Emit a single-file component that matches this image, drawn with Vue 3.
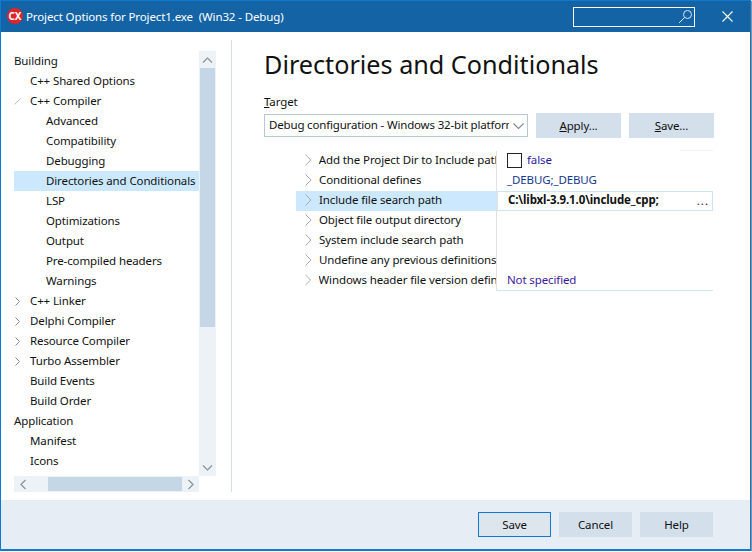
<template>
  <div class="window">
    <header class="titlebar">
      <span class="logo">CX</span>
      <span class="title">Project Options for Project1.exe&nbsp; (Win32 - Debug)</span>
      <div class="search">
        <svg width="15" height="15" viewBox="0 0 15 15" fill="none" stroke="#d8e6f2" stroke-width="1">
          <circle cx="9.5" cy="5.5" r="4" />
          <path d="M6.5 8.5 1 14" />
        </svg>
      </div>
      <svg class="close" width="11" height="11" viewBox="0 0 11 11" stroke="#fff" stroke-width="1.1">
        <path d="M.5.5l10 10M10.5.5l-10 10" />
      </svg>
    </header>

    <div class="body">
      <aside class="nav">
        <div class="tree-wrap">
          <ul class="tree">
            <li
              v-for="node in tree"
              :key="node.label"
              class="tree-row"
              :class="['level-' + node.level, { selected: node.selected }]"
            >
              <svg v-if="node.state === 'closed'" class="twisty" width="5" height="9" viewBox="0 0 5 9" fill="none" stroke="#8a8a8a">
                <path d="M.5.5l4 4-4 4" />
              </svg>
              <svg v-if="node.state === 'open'" class="twisty open" width="7" height="7" viewBox="0 0 7 7" fill="none" stroke="#bdbdbd">
                <path d="M.5 6.5l6-6" />
              </svg>
              {{ node.label }}
            </li>
          </ul>
          <div class="vscroll">
            <div class="arrow">
              <svg width="11" height="6" viewBox="0 0 11 6" fill="none" stroke="#8a9299" stroke-width="1.2"><path d="M1 5.500l4.500-4.500 4.500 4.500" /></svg>
            </div>
            <div class="vthumb"></div>
            <div class="vtrack"></div>
            <div class="arrow">
              <svg width="11" height="6" viewBox="0 0 11 6" fill="none" stroke="#8a9299" stroke-width="1.2"><path d="M1 .5l4.500 4.500 4.500-4.500" /></svg>
            </div>
          </div>
        </div>
        <div class="hscroll">
          <div class="harrow">
            <svg width="6" height="11" viewBox="0 0 6 11" fill="none" stroke="#8a9299" stroke-width="1.2"><path d="M5.500 1l-4.500 4.500 4.500 4.500" /></svg>
          </div>
          <div class="hspace"></div>
          <div class="hthumb"></div>
          <div class="harrow">
            <svg width="6" height="11" viewBox="0 0 6 11" fill="none" stroke="#8a9299" stroke-width="1.2"><path d="M.5 1l4.500 4.500-4.500 4.500" /></svg>
          </div>
        </div>
      </aside>

      <main class="content">
        <h1>Directories and Conditionals</h1>
        <label class="target-label"><u>T</u>arget</label>
        <div class="target-row">
          <div class="combo">
            <span class="combo-text">Debug configuration - Windows 32-bit platform</span>
            <svg width="11" height="6" viewBox="0 0 11 6" fill="none" stroke="#7d8a94" stroke-width="1.1"><path d="M.5.500l5 5 5-5" /></svg>
          </div>
          <button class="btn wide"><u>A</u>pply...</button>
          <button class="btn wide"><u>S</u>ave...</button>
        </div>

        <div class="grid">
          <div class="grid-top"></div>
          <div v-for="row in props" :key="row.name" class="grid-row" :class="{ active: row.active }">
            <div class="prop-name" :class="{ active: row.active }">
              <svg width="7" height="12" viewBox="0 0 7 12" fill="none" stroke="#a8a8a8"><path d="M.5 .5l5.500 5.500-5.500 5.500" /></svg>
              <span class="prop-label">{{ row.name }}</span>
            </div>
            <div class="prop-value" :class="row.kind">
              <span v-if="row.kind === 'check'" class="checkbox"></span>
              <span class="val">{{ row.value }}</span>
              <span v-if="row.active" class="dots">...</span>
            </div>
          </div>
        </div>
      </main>
    </div>

    <footer class="footer">
      <button class="btn foot primary">Save</button>
      <button class="btn foot">Cancel</button>
      <button class="btn foot">Help</button>
    </footer>
  </div>
</template>

<script setup>
const tree = [
  { label: 'Building', level: 0 },
  { label: 'C++ Shared Options', level: 1 },
  { label: 'C++ Compiler', level: 1, state: 'open' },
  { label: 'Advanced', level: 2 },
  { label: 'Compatibility', level: 2 },
  { label: 'Debugging', level: 2 },
  { label: 'Directories and Conditionals', level: 2, selected: true },
  { label: 'LSP', level: 2 },
  { label: 'Optimizations', level: 2 },
  { label: 'Output', level: 2 },
  { label: 'Pre-compiled headers', level: 2 },
  { label: 'Warnings', level: 2 },
  { label: 'C++ Linker', level: 1, state: 'closed' },
  { label: 'Delphi Compiler', level: 1, state: 'closed' },
  { label: 'Resource Compiler', level: 1, state: 'closed' },
  { label: 'Turbo Assembler', level: 1, state: 'closed' },
  { label: 'Build Events', level: 1 },
  { label: 'Build Order', level: 1 },
  { label: 'Application', level: 0 },
  { label: 'Manifest', level: 1 },
  { label: 'Icons', level: 1 }
]

const props = [
  { name: 'Add the Project Dir to Include path', value: 'false', kind: 'check' },
  { name: 'Conditional defines', value: '_DEBUG;_DEBUG', kind: 'text' },
  { name: 'Include file search path', value: 'C:\\libxl-3.9.1.0\\include_cpp;', kind: 'bold', active: true },
  { name: 'Object file output directory', value: '' },
  { name: 'System include search path', value: '' },
  { name: 'Undefine any previous definitions', value: '' },
  { name: 'Windows header file version defines', value: 'Not specified', kind: 'enum' }
]
</script>

<style>
html, body {
  margin: 0;
  background: #fff;
}
</style>

<style scoped>
.window {
  width: 751px;
  height: 551px;
  box-sizing: border-box;
  border: 1px solid #0f78d2;
  border-bottom-width: 2px;
  display: flex;
  flex-direction: column;
  background: #fff;
  box-shadow: 1px 1px 1px #8a9299;
  font-family: "Noto Sans", "Open Sans", sans-serif;
  font-size: 11.5px;
  letter-spacing: -0.12px;
  color: #111;
}

.titlebar {
  height: 31px;
  flex: none;
  display: flex;
  align-items: center;
  background: #1464a5;
  color: #fff;
  padding-left: 6px;
}
.logo {
  width: 16px;
  height: 16px;
  border-radius: 50%;
  background: #e0242c;
  color: #fff;
  font-size: 10px;
  font-weight: 700;
  letter-spacing: 0;
  line-height: 16px;
  text-align: center;
  margin-right: 3px;
  margin-bottom: 2px;
}
.title {
  flex: 1;
  white-space: nowrap;
}
.search {
  width: 122px;
  height: 20px;
  box-sizing: border-box;
  border: 1px solid #fff;
  display: flex;
  align-items: center;
  justify-content: flex-end;
  padding-right: 1px;
}
.close {
  margin: 0 17px 0 27px;
}

.body {
  flex: 1;
  min-height: 0;
  display: flex;
  padding: 8px 0 8px;
}

.nav {
  width: 231px;
  box-sizing: border-box;
  flex: none;
  padding: 11px 15px 0 13px;
  border-right: 1px solid #d5dfe6;
  display: flex;
  flex-direction: column;
}
.tree-wrap {
  height: 425px;
  flex: none;
  display: flex;
}
.tree {
  list-style: none;
  margin: 0;
  padding: 0;
  width: 185px;
  flex: none;
}
.tree-row {
  height: 20px;
  line-height: 20px;
  white-space: nowrap;
  position: relative;
}
.level-0 { padding-left: 0; }
.level-1 { padding-left: 16px; }
.level-2 { padding-left: 32px; }
.selected { background: #cce8ff; }
.twisty {
  position: absolute;
  left: 1px;
  top: 6px;
}
.twisty.open {
  left: 0;
  top: 7px;
}

.vscroll {
  width: 17px;
  background: #edf2f6;
  display: flex;
  flex-direction: column;
}
.arrow {
  height: 17px;
  flex: none;
  display: flex;
  align-items: center;
  justify-content: center;
}
.vthumb {
  height: 259px;
  margin: 0 1px;
  background: #c5d7e6;
}
.vtrack { flex: 1; }

.hscroll {
  height: 16px;
  width: 185px;
  background: #edf2f6;
  display: flex;
}
.harrow {
  width: 17px;
  flex: none;
  display: flex;
  align-items: center;
  justify-content: center;
}
.hspace { width: 17px; }
.hthumb {
  flex: 1;
  margin: 1px 0;
  background: #c5d7e6;
}

.content {
  flex: 1;
  min-width: 0;
  padding-left: 32px;
}
h1 {
  margin: 0;
  font-size: 25.2px;
  font-weight: 400;
  letter-spacing: 0;
  line-height: 36px;
  padding-top: 6px;
  color: #111;
  white-space: nowrap;
}
.target-label {
  display: block;
  margin-top: 11px;
  line-height: 18px;
}
.target-row {
  display: flex;
  align-items: center;
  gap: 8px;
  margin-top: 2px;
}
.combo {
  width: 264px;
  height: 23px;
  box-sizing: border-box;
  border: 1px solid #b8c8d0;
  display: flex;
  align-items: center;
  padding: 0 3px 2px 4px;
  gap: 4px;
}
.combo svg {
  margin-top: 2px;
}
.combo-text {
  flex: 1;
  overflow: hidden;
  white-space: nowrap;
  letter-spacing: -0.17px;
}
.btn {
  font: inherit;
  letter-spacing: inherit;
  color: #111;
  background: #d3dfeb;
  border: 0;
  padding: 0;
  box-sizing: border-box;
  height: 25px;
}
.wide { width: 85px; }

.grid {
  margin-top: 12px;
  margin-left: 32px;
  width: 417px;
}
.grid-top {
  height: 1px;
  width: 33px;
  margin-left: 384px;
  background: #eef2f5;
}
.grid-row {
  display: flex;
  height: 20px;
  line-height: 20px;
}
.prop-name {
  width: 201px;
  flex: none;
  display: flex;
  align-items: center;
  padding: 0 0 2px 9px;
  box-sizing: border-box;
  gap: 7px;
  white-space: nowrap;
  overflow: hidden;
  border-right: 1px solid #dfe3e6;
}
.prop-name.active { background: #cce8ff; }
.prop-label { overflow: hidden; }
.prop-value {
  flex: 1;
  display: flex;
  align-items: center;
  padding: 0 0 2px 10px;
  box-sizing: border-box;
  min-width: 0;
}
.grid-row:last-child .prop-value { border-bottom: 1px solid #cfe4f5; }
.grid-row.active .prop-value {
  border: 1px solid #cce4f7;
  font-weight: 700;
  padding-left: 10px;
}
.val { flex: 1; white-space: nowrap; }
.check .val { color: #2b1a9c; }
.text .val { color: #123a8c; }
.enum .val { color: #3a1aa0; }
.checkbox {
  width: 15px;
  height: 15px;
  box-sizing: border-box;
  border: 1px solid #222;
  margin-right: 5px;
}
.dots {
  font-weight: 400;
  letter-spacing: 1px;
  margin: 2px 3px 0 0;
}

.footer {
  height: 49px;
  flex: none;
  background: #e6edf4;
  display: flex;
  gap: 8px;
  justify-content: flex-end;
  padding: 12px 37px 0 0;
  box-sizing: border-box;
}
.foot { width: 73px; }
.primary {
  background: #dde5ed;
  border: 1px solid #0f78d2;
}
</style>
